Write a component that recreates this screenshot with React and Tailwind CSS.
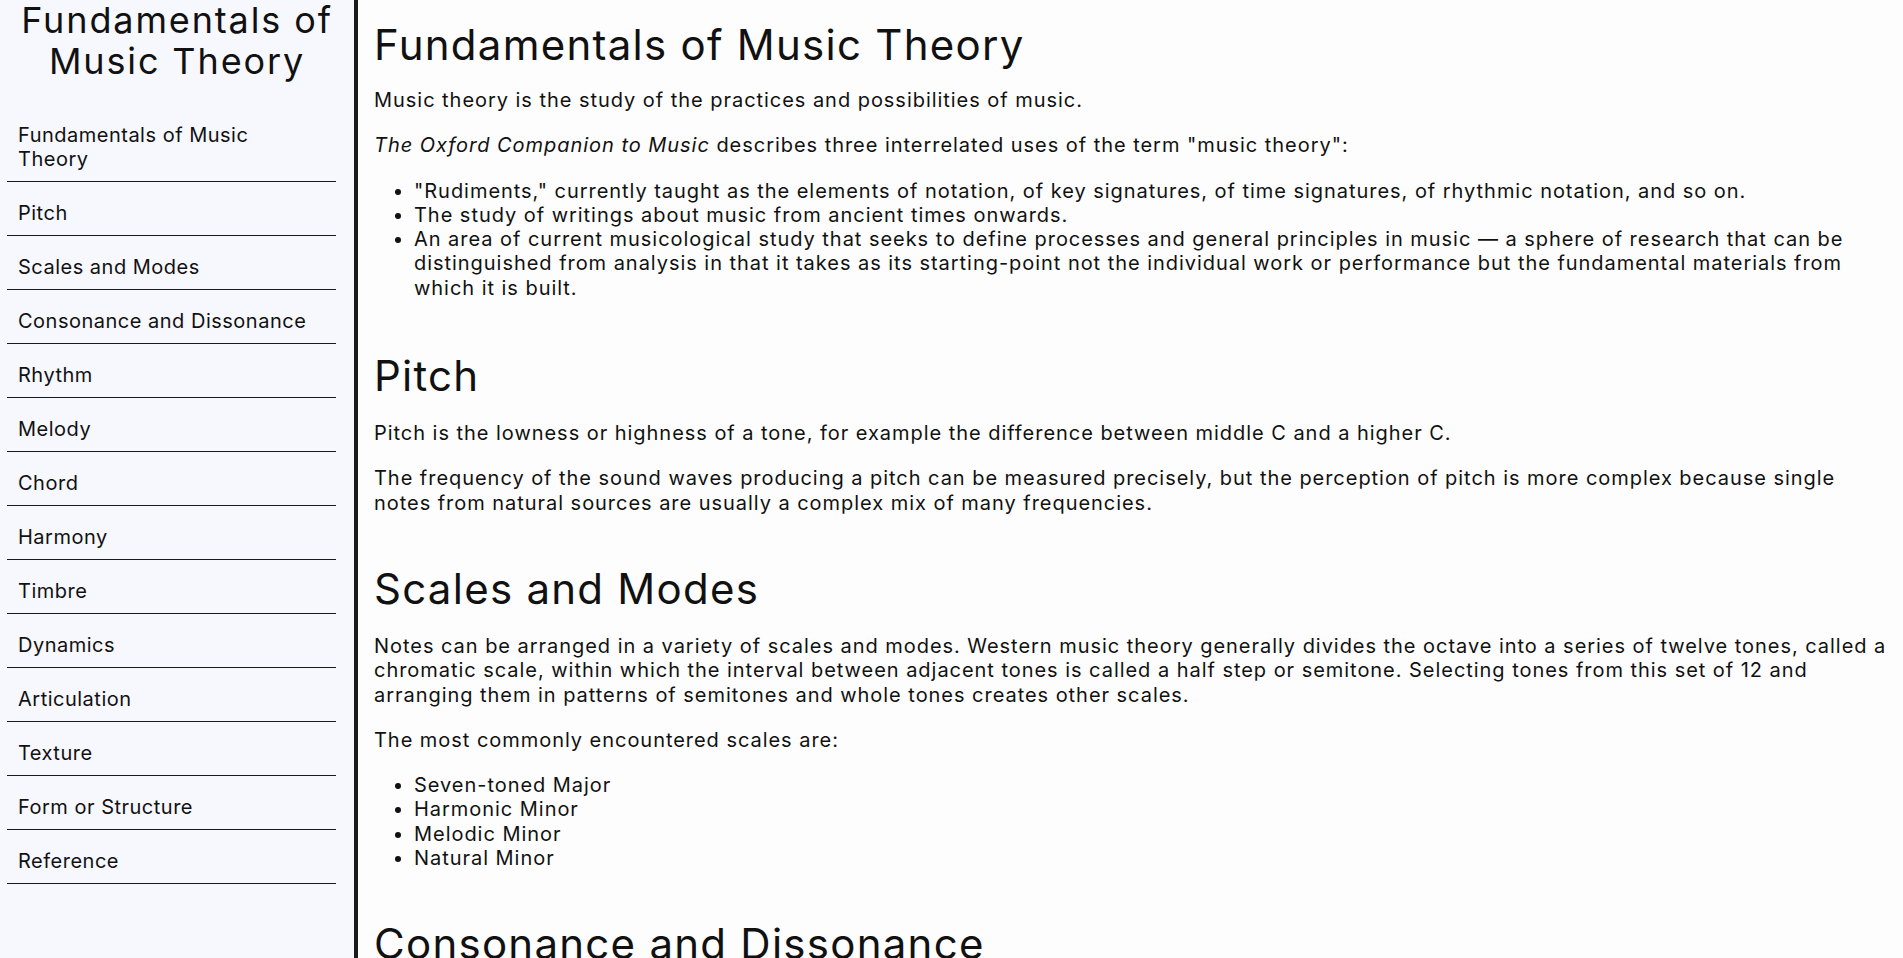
import React from "react";

const navItems = [
  "Fundamentals of Music Theory",
  "Pitch",
  "Scales and Modes",
  "Consonance and Dissonance",
  "Rhythm",
  "Melody",
  "Chord",
  "Harmony",
  "Timbre",
  "Dynamics",
  "Articulation",
  "Texture",
  "Form or Structure",
  "Reference",
];

const Sidebar = () => (
  <nav className="w-[358px] shrink-0 h-screen bg-[#f7f7fe] border-r-4 border-[#1a1a1a]">
    <header className="px-3 text-center text-[36px] leading-[41px] tracking-[0.052em] mb-[22px]">
      Fundamentals of Music Theory
    </header>
    <ul className="ml-[7px] w-[329px]">
      {navItems.map((item) => (
        <li key={item}>
          <a
            href={"#" + item.replace(/ /g, "_")}
            className="block pl-[11px] pr-[20px] pt-[19px] pb-[10px] border-b border-[#1a1a1a] text-[20px] leading-[24px] tracking-[0.025em]"
          >
            {item}
          </a>
        </li>
      ))}
    </ul>
  </nav>
);

const Heading = ({ children, className = "mb-5" }) => (
  <header className={`text-[42px] leading-[51px] tracking-[0.03em] ${className}`}>{children}</header>
);

const Bullets = ({ items }) => (
  <ul className="list-disc pl-10">
    {items.map((t) => (
      <li key={t}>{t}</li>
    ))}
  </ul>
);

export default function App() {
  return (
    <div
      className="flex h-screen overflow-hidden text-[#111]"
      style={{ fontFamily: "Inter, 'Noto Sans', sans-serif" }}
    >
      <Sidebar />
      <main className="flex-1 bg-[#fdfdfd] pl-4 pr-[6px] pt-[19px] text-[20px] leading-[24.3px] tracking-[0.048em] overflow-hidden">
        <section id="Fundamentals_of_Music_Theory">
          <Heading className="mb-[18px]">Fundamentals of Music Theory</Heading>
          <p className="mb-[21px]">
            Music theory is the study of the practices and possibilities of music.
          </p>
          <p className="mb-[21px]">
            <i>The Oxford Companion to Music</i> describes three interrelated uses of the term "music theory":
          </p>
          <Bullets
            items={[
              '"Rudiments," currently taught as the elements of notation, of key signatures, of time signatures, of rhythmic notation, and so on.',
              "The study of writings about music from ancient times onwards.",
              "An area of current musicological study that seeks to define processes and general principles in music \u2014 a sphere of research that can be distinguished from analysis in that it takes as its starting-point not the individual work or performance but the fundamental materials from which it is built.",
            ]}
          />
        </section>

        <section id="Pitch" className="mt-[50px]">
          <Heading>Pitch</Heading>
          <p className="mb-[21px]">
            Pitch is the lowness or highness of a tone, for example the difference between middle C and a higher C.
          </p>
          <p>
            The frequency of the sound waves producing a pitch can be measured precisely, but the perception of pitch is more complex because single notes from natural sources are usually a complex mix of many frequencies.
          </p>
        </section>

        <section id="Scales_and_Modes" className="mt-[48px]">
          <Heading>Scales and Modes</Heading>
          <p className="mb-[21px]">
            Notes can be arranged in a variety of scales and modes. Western music theory generally divides the octave into a series of twelve tones, called a chromatic scale, within which the interval between adjacent tones is called a half step or semitone. Selecting tones from this set of 12 and arranging them in patterns of semitones and whole tones creates other scales.
          </p>
          <p className="mb-[21px]">The most commonly encountered scales are:</p>
          <Bullets
            items={["Seven-toned Major", "Harmonic Minor", "Melodic Minor", "Natural Minor"]}
          />
        </section>

        <section id="Consonance_and_Dissonance" className="mt-[48px]">
          <Heading>Consonance and Dissonance</Heading>
          <p className="mb-[21px]">
            Consonance and dissonance are subjective qualities of the sonority of intervals that vary widely in different cultures and over the ages.
          </p>
        </section>
      </main>
    </div>
  );
}
